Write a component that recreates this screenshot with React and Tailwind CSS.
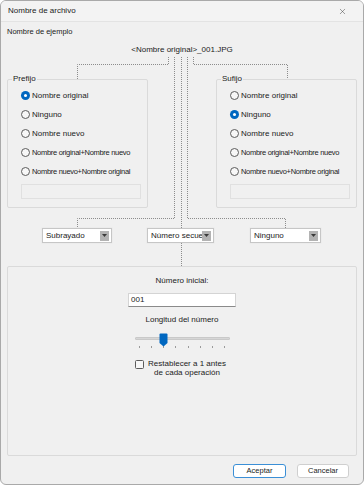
import React from 'react';
import { X } from 'lucide-react';

const prefixOptions = [
  'Nombre original',
  'Ninguno',
  'Nombre nuevo',
  'Nombre original+Nombre nuevo',
  'Nombre nuevo+Nombre original',
];

function Radio({ checked }) {
  if (checked) {
    return (
      <span className="w-[9px] h-[9px] rounded-full bg-[#0067c0] flex items-center justify-center shrink-0">
        <span className="w-[3px] h-[3px] rounded-full bg-white" />
      </span>
    );
  }
  return <span className="w-[9px] h-[9px] rounded-full border border-[#5c5c5c] bg-[#f7f7f7] shrink-0" />;
}

function GroupBox({ label, selected }) {
  return (
    <div className="relative w-[141px] h-[129px] border border-[#dadada] rounded-[2px] pt-[6px] pl-[13px]">
      <span className="absolute -top-[6px] left-[4px] px-[1px] bg-[#f0f0f0] leading-[10px]">{label}</span>
      {prefixOptions.map((opt, i) => (
        <div key={opt} className="h-[19px] flex items-center gap-[2px]">
          <Radio checked={i === selected} />
          {opt.length > 16 ? (
            <span className="text-[7.5px] tracking-[-0.3px] whitespace-nowrap">{opt}</span>
          ) : (
            <span className="whitespace-nowrap">{opt}</span>
          )}
        </div>
      ))}
      <div className="mt-[3px] w-[120px] h-[15px] border border-[#e0e0e0] bg-[#f0f0f0]" />
    </div>
  );
}

function Dropdown({ value, width }) {
  return (
    <div className={`${width} h-[15px] flex items-center bg-white border border-[#c6c6c6] pl-[3px] pr-[2px] shadow-[0_0_0_0.5px_#e8e8e8]`}>
      <span className="flex-1 min-w-0 overflow-hidden whitespace-nowrap leading-[10px]">{value}</span>
      <span className="w-[9px] h-[10px] bg-[#b3b3b3] flex items-center justify-center shrink-0">
        <svg width="5" height="3" viewBox="0 0 5 3">
          <path d="M0 0H5L2.5 3Z" fill="#3a3a3a" />
        </svg>
      </span>
    </div>
  );
}

function Connectors() {
  // window coordinates (offset by the 1px window border)
  const lines = [
    'M168.5 57V64.5H77.5V79',
    'M174.5 57V218.5H77.5V228',
    'M181.5 57V228',
    'M181.5 243V266',
    'M187.5 57V218.5H285.5V228',
    'M193.5 57V64.5H287.5V79',
  ];
  return (
    <svg
      className="absolute -left-px -top-px pointer-events-none"
      width="364"
      height="485"
      viewBox="0 0 364 485"
    >
      {lines.map((d) => (
        <path key={d} d={d} fill="none" stroke="#8c8c8c" strokeWidth="1" strokeDasharray="1 1" />
      ))}
    </svg>
  );
}

function NumberSlider() {
  const ticks = [0, 1, 2, 3, 4, 5, 6, 7];
  return (
    <div className="relative w-[95px] h-[16px] mx-auto mt-[8px]">
      <div className="mt-[4px] h-[3px] bg-[#d6d6d6] border border-[#c9c9c9] rounded-[1px]" />
      <div className="flex justify-between px-[4px] mt-[6px]">
        {ticks.map((t) => (
          <span key={t} className="w-px h-[2px] bg-[#9a9a9a]" />
        ))}
      </div>
      <svg className="absolute top-0 left-[24px]" width="9" height="14" viewBox="0 0 9 14">
        <path d="M0.5 1.5Q0.5 0.5 1.5 0.5H7.5Q8.5 0.5 8.5 1.5V10L4.5 13.5L0.5 10Z" fill="#0067c0" />
      </svg>
    </div>
  );
}

export default function App() {
  return (
    <div className="relative w-[364px] h-[485px] bg-[#f0f0f0] border border-[#a9a9a9] rounded-[6px] overflow-hidden text-[8px] leading-[10px] text-[#1b1b1b] font-[family-name:Liberation_Sans,Arial,sans-serif]">
      <Connectors />

      <div className="h-[21px] flex items-center justify-between pl-[7px] pr-[16px] bg-[#f3f3f3] border-b border-[#e3e3e3]">
        <span>Nombre de archivo</span>
        <X size={9} strokeWidth={1.2} color="#333" />
      </div>

      <div className="mt-[5px] pl-[6px] text-[7.5px]">Nombre de ejemplo</div>
      <div className="mt-[8px] text-center">&lt;Nombre original&gt;_001.JPG</div>

      <div className="mt-[24px] px-[6px] flex justify-between">
        <GroupBox label="Prefijo" selected={0} />
        <GroupBox label="Sufijo" selected={1} />
      </div>

      <div className="mt-[20px] flex">
        <div className="ml-[41px]">
          <Dropdown value="Subrayado" width="w-[70px]" />
        </div>
        <div className="ml-[35px]">
          <Dropdown value="Número secuencial" width="w-[67px]" />
        </div>
        <div className="ml-[36px]">
          <Dropdown value="Ninguno" width="w-[71px]" />
        </div>
      </div>

      <div className="mt-[23px] mx-[6px] h-[190px] border border-[#dadada] rounded-[2px] pt-[9px] flex flex-col items-center">
        <div>Número inicial:</div>
        <div className="mt-[7px] w-[108px] h-[14px] bg-white border border-[#d4d4d4] border-b-[#8a8a8a] pl-[2px] flex items-center">
          001
        </div>
        <div className="mt-[8px]">Longitud del número</div>
        <NumberSlider />
        <div className="mt-[10px] flex items-start gap-[4px] -ml-[3px]">
          <span className="mt-[1px] w-[9px] h-[9px] rounded-[1.5px] border border-[#5c5c5c] bg-[#f7f7f7]" />
          <div className="text-center leading-[9px]">
            <div>Restablecer a 1 antes</div>
            <div>de cada operación</div>
          </div>
        </div>
      </div>

      <div className="mt-[8px] pr-[14px] flex justify-end gap-[11px] text-[7.5px]">
        <button className="w-[53px] h-[14px] bg-white border border-[#3b8fd6] rounded-[3px] flex items-center justify-center">
          Aceptar
        </button>
        <button className="w-[52px] h-[14px] bg-white border border-[#cfcfcf] rounded-[3px] flex items-center justify-center">
          Cancelar
        </button>
      </div>
    </div>
  );
}
